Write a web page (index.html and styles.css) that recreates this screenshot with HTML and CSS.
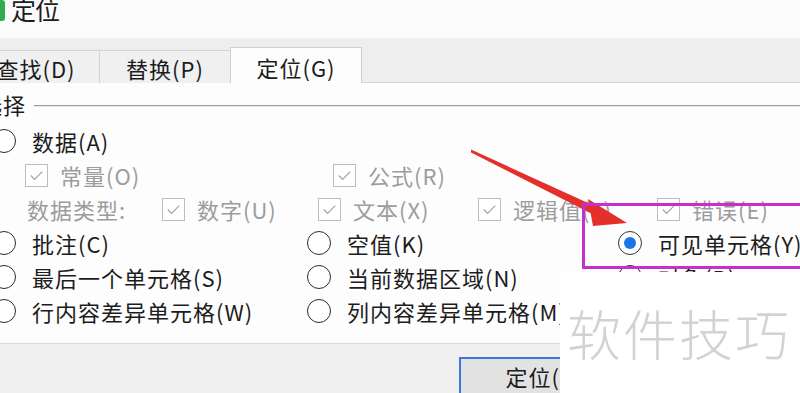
FILE: index.html
```html
<!DOCTYPE html>
<html lang="zh-CN">
<head>
<meta charset="utf-8">
<title>定位</title>
<link rel="stylesheet" href="styles.css">
</head>
<body>
<div class="page">
  <div class="titlebar">
    <div class="app-icon"></div>
    <div class="title">定位</div>
  </div>
  <div class="tabbar">
    <div class="tab tab-first">查找(D)</div>
    <div class="tab tab-second">替换(P)</div>
    <div class="tab tab-active">定位(G)</div>
  </div>
  <div class="panel">
    <div class="legend">
      <span class="legend-text">选择</span>
      <span class="legend-line"></span>
    </div>
    <div class="row cols">
      <div class="opt"><span class="radio"></span><span class="lbl">数据(A)</span></div>
    </div>
    <div class="row cols">
      <div class="opt sub1"><span class="check"><svg viewBox="0 0 22 22"><polyline points="5,11 9,15 17,7"/></svg></span><span class="lbl dim">常量(O)</span></div>
      <div class="opt sub2"><span class="check"><svg viewBox="0 0 22 22"><polyline points="5,11 9,15 17,7"/></svg></span><span class="lbl dim">公式(R)</span></div>
    </div>
    <div class="row types">
      <div class="type-label dim">数据类型:</div>
      <div class="opt w156"><span class="check"><svg viewBox="0 0 22 22"><polyline points="5,11 9,15 17,7"/></svg></span><span class="lbl dim">数字(U)</span></div>
      <div class="opt w160"><span class="check"><svg viewBox="0 0 22 22"><polyline points="5,11 9,15 17,7"/></svg></span><span class="lbl dim">文本(X)</span></div>
      <div class="opt w179"><span class="check"><svg viewBox="0 0 22 22"><polyline points="5,11 9,15 17,7"/></svg></span><span class="lbl dim">逻辑值(L)</span></div>
      <div class="opt"><span class="check"><svg viewBox="0 0 22 22"><polyline points="5,11 9,15 17,7"/></svg></span><span class="lbl dim">错误(E)</span></div>
    </div>
    <div class="row cols">
      <div class="opt"><span class="radio"></span><span class="lbl">批注(C)</span></div>
      <div class="opt"><span class="radio"></span><span class="lbl">空值(K)</span></div>
      <div class="opt"><span class="radio on"></span><span class="lbl">可见单元格(Y)</span></div>
    </div>
    <div class="row cols">
      <div class="opt"><span class="radio"></span><span class="lbl">最后一个单元格(S)</span></div>
      <div class="opt"><span class="radio"></span><span class="lbl">当前数据区域(N)</span></div>
      <div class="opt"><span class="radio"></span><span class="lbl">对象(B)</span></div>
    </div>
    <div class="row cols">
      <div class="opt"><span class="radio"></span><span class="lbl">行内容差异单元格(W)</span></div>
      <div class="opt"><span class="radio"></span><span class="lbl">列内容差异单元格(M)</span></div>
    </div>
  </div>
  <div class="footer">
    <div class="btn">定位(G)</div>
  </div>

  <svg class="arrow" viewBox="0 0 800 393" width="800" height="393">
    <polygon points="471,149.5 599,208 596,216 471,152.5"/>
    <polygon points="588,199 627,223 593,226"/>
  </svg>
  <div class="highlight"></div>
  <div class="watermark">软件技巧</div>
</div>
</body>
</html>
```
FILE: styles.css
```css
* { box-sizing: border-box; }
html, body { margin: 0; padding: 0; }
body {
  width: 800px;
  height: 393px;
  overflow: hidden;
  font-family: "Noto Sans CJK SC", "Noto Sans", sans-serif;
  color: #1c1c1c;
  background: #f0f0f0;
}
.page {
  position: relative;
  width: 800px;
  height: 393px;
  overflow: hidden;
}
.titlebar {
  height: 38px;
  background: #fbfbfc;
  display: flex;
  align-items: flex-start;
}
.app-icon {
  width: 5px;
  height: 21px;
  background: #2fae4e;
  border-radius: 0 3px 3px 0;
}
.title {
  margin-left: 6px;
  margin-top: -4px;
  font-size: 25px;
  line-height: 26px;
  letter-spacing: -1px;
}
.tabbar {
  height: 45px;
  background: #eeeeef;
  border-bottom: 1px solid #d6d6d6;
  display: flex;
  align-items: flex-end;
}
.tab {
  height: 33px;
  border: 1px solid #d4d4d4;
  border-bottom: none;
  background: #f0f0f0;
  font-size: 22px;
  line-height: 22px;
  letter-spacing: 1px;
  padding-top: 6px;
  text-align: center;
  margin-bottom: -1px;
}
.tab-first { margin-left: -28px; width: 127px; border-right: none; }
.tab-second { width: 132px; }
.tab-active {
  width: 132px;
  height: 36px;
  margin-left: -1px;
  padding-top: 8px;
  background: #fdfdfe;
  border-color: #cfcfcf;
}
.panel {
  height: 261px;
  background: #fdfdfe;
  border-bottom: 1px solid #dcdcdc;
}
.legend {
  height: 41px;
  display: flex;
  align-items: center;
  margin-left: -20px;
}
.legend-text {
  font-size: 22px;
  line-height: 22px;
  letter-spacing: 1px;
}
.legend-line {
  flex: 1;
  margin-left: 8px;
  margin-top: 4px;
  height: 2px;
  border-top: 1px solid #9d9d9d;
  border-bottom: 1px solid #e6e6e6;
}
.row {
  height: 34px;
  display: flex;
  align-items: center;
}
.cols {
  display: grid;
  grid-template-columns: 315px 311px 1fr;
  align-items: center;
  margin-left: -8px;
}
.opt {
  display: flex;
  align-items: center;
  white-space: nowrap;
}
.lbl {
  font-size: 22px;
  line-height: 22px;
  letter-spacing: 1px;
}
.dim { color: #9c9c9c; }
.radio {
  width: 24px;
  height: 24px;
  border: 1.6px solid #2a2a2a;
  border-radius: 50%;
  margin-right: 16px;
  flex: none;
  display: flex;
  align-items: center;
  justify-content: center;
  background: #fff;
}
.radio.on { border-color: #30343a; }
.radio.on::after {
  content: "";
  width: 12px;
  height: 12px;
  border-radius: 50%;
  background: #1877e6;
}
.check {
  width: 23px;
  height: 23px;
  border: 1px solid #bdbdbd;
  margin-right: 12px;
  flex: none;
  background: #fff;
}
.check svg {
  display: block;
  width: 21px;
  height: 21px;
}
.check polyline {
  fill: none;
  stroke: #a3a3a3;
  stroke-width: 1.3;
}
.sub1 { margin-left: 33px; }
.sub2 { margin-left: 26px; }
.types { padding-left: 27px; }
.type-label {
  width: 135px;
  font-size: 22px;
  line-height: 22px;
  letter-spacing: 1px;
}
.w156 { width: 156px; }
.w160 { width: 160px; }
.w179 { width: 179px; }
.footer {
  height: 49px;
  background: #f0f0f0;
  padding-top: 13px;
  padding-left: 459px;
}
.btn {
  width: 172px;
  height: 40px;
  border: 2px solid #3b7ad6;
  background: #e2e2e2;
  font-size: 22px;
  line-height: 34px;
  letter-spacing: 1px;
  text-align: center;
}
.arrow {
  position: absolute;
  left: 0;
  top: 0;
}
.arrow polygon { fill: #e3302b; }
.highlight {
  position: absolute;
  left: 582px;
  top: 203px;
  width: 240px;
  height: 66px;
  border: 3px solid #c62fc9;
}
.watermark {
  position: absolute;
  left: 560px;
  top: 272px;
  width: 240px;
  height: 121px;
  background: #ffffff;
  color: #d2d2d2;
  font-size: 54px;
  font-weight: 300;
  letter-spacing: 2px;
  line-height: 121px;
  padding-left: 7px;
  white-space: nowrap;
}
```
